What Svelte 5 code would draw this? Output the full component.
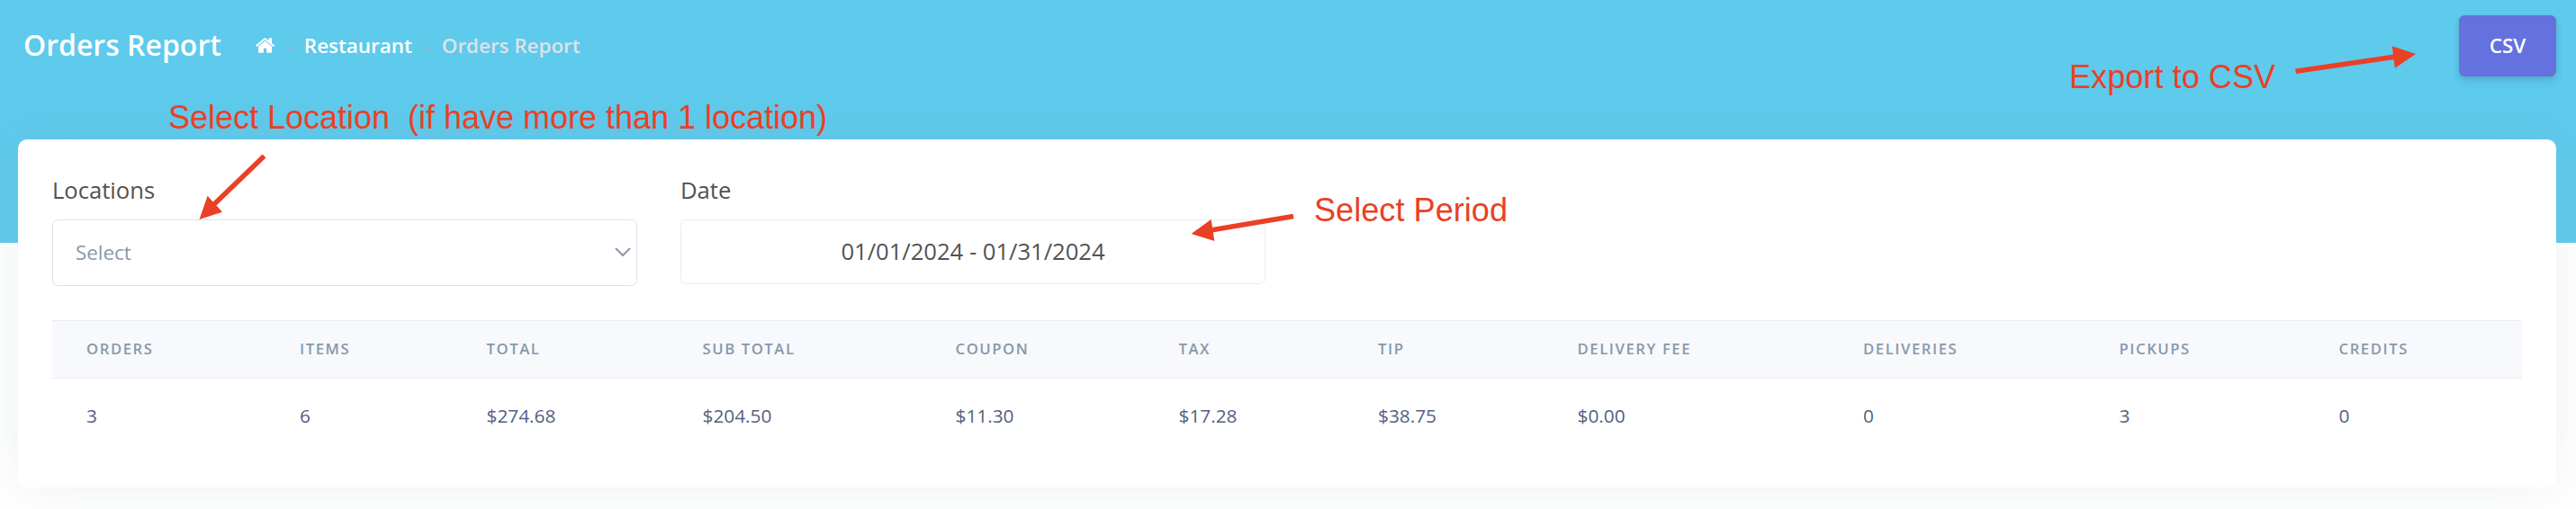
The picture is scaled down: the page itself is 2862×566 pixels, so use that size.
<script>
    const columns = [
        { label: 'Orders', value: '3', width: 237 },
        { label: 'Items', value: '6', width: 207.5 },
        { label: 'Total', value: '$274.68', width: 240 },
        { label: 'Sub total', value: '$204.50', width: 281 },
        { label: 'Coupon', value: '$11.30', width: 248 },
        { label: 'Tax', value: '$17.28', width: 221.5 },
        { label: 'Tip', value: '$38.75', width: 221.5 },
        { label: 'Delivery fee', value: '$0.00', width: 317.5 },
        { label: 'Deliveries', value: '0', width: 284.5 },
        { label: 'Pickups', value: '3', width: 244 },
        { label: 'Credits', value: '0', width: 241.5 }
    ];

    const notes = [
        { text: 'Select Location\u00a0 (if have more than 1 location)', x: 187, y: 142.5, width: 732 },
        { text: 'Select Period', x: 1460, y: 246, width: 215 },
        { text: 'Export to CSV', x: 2299, y: 97.5, width: 229 }
    ];

    const arrows = [
        { shaft: 'M293.5 173.5L236 229', head: '221.5,244 230.6,217.7 247,235.7' },
        { shaft: 'M1437 240.5L1345 256', head: '1323.5,260 1345.6,244 1349.3,268' },
        { shaft: 'M2550.5 79.3L2662 63', head: '2684,60 2657.7,51.3 2660.8,75.7' }
    ];
</script>

<div class="page">
    <header>
        <h1>Orders Report</h1>
        <nav>
            <a class="home" href="#home" aria-label="Home">
                <svg viewBox="90 250 1612 1290" width="21" height="17">
                    <path d="M1472 992v480q0 26-19 45t-45 19h-384v-384h-256v384h-384q-26 0-45-19t-19-45v-480q0-1 .5-3t.5-3l575-474 575 474q1 2 1 6zm223-69l-62 74q-8 9-21 11h-3q-13 0-21-7l-692-577-692 577q-12 8-24 7-13-2-21-11l-62-74q-8-10-7-23.5t11-21.5l719-599q32-26 76-26t76 26l244 204v-195q0-14 9-23t23-9h192q14 0 23 9t9 23v408l219 182q10 8 11 21.5t-7 23.5z" />
                </svg>
            </a>
            <span class="dash">-</span>
            <a href="#restaurant">Restaurant</a>
            <span class="dash">-</span>
            <span class="current">Orders Report</span>
        </nav>
        <button class="csv">CSV</button>
    </header>

    <main class="card">
        <div class="filters">
            <div class="field">
                <div class="label">Locations</div>
                <div class="select">
                    <span>Select</span>
                    <svg class="chevron" viewBox="0 0 18 10" width="18" height="10">
                        <path d="M1 1L9 9L17 1" />
                    </svg>
                </div>
            </div>
            <div class="field">
                <div class="label">Date</div>
                <div class="date">01/01/2024 - 01/31/2024</div>
            </div>
        </div>

        <table>
            <colgroup>
                {#each columns as column}
                    <col style="width: {column.width}px" />
                {/each}
            </colgroup>
            <thead>
                <tr>
                    {#each columns as column}
                        <th>{column.label}</th>
                    {/each}
                </tr>
            </thead>
            <tbody>
                <tr>
                    {#each columns as column}
                        <td>{column.value}</td>
                    {/each}
                </tr>
            </tbody>
        </table>
    </main>

    <svg class="notes" viewBox="0 0 2862 566" width="2862" height="566">
        {#each arrows as arrow}
            <path d={arrow.shaft} />
            <polygon points={arrow.head} />
        {/each}
        {#each notes as note}
            <text x={note.x} y={note.y} textLength={note.width}>{note.text}</text>
        {/each}
    </svg>
</div>

<style>
    :global(body) {
        margin: 0;
    }

    .page {
        position: relative;
        box-sizing: border-box;
        width: 2862px;
        height: 566px;
        padding: 0 22px 0 20px;
        overflow: hidden;
        font-family: "Open Sans", sans-serif;
        background: linear-gradient(#5ecaec 270px, #fff 270px);
    }

    header {
        display: flex;
        align-items: center;
        box-sizing: border-box;
        height: 155px;
        padding: 0 0 53px 6px;
        color: #fff;
    }

    h1 {
        margin: 0 0 2px;
        font-size: 32px;
        font-weight: 600;
        line-height: 48px;
    }

    nav {
        display: flex;
        align-items: center;
        flex: 1;
        margin: 0 0 2px 38px;
        font-size: 22.4px;
        font-weight: 600;
    }

    nav a {
        color: #fff;
        text-decoration: none;
    }

    .home {
        display: flex;
    }

    .home svg {
        fill: #fff;
    }

    .dash {
        width: 33px;
        text-align: center;
        color: #b2b0b6;
    }

    .current {
        color: #dee2e6;
    }

    .csv {
        width: 108px;
        height: 68px;
        padding: 0 0 2px;
        color: #fff;
        font: 600 22.4px "Open Sans", sans-serif;
        background: #6571df;
        border: 0;
        border-radius: 6.4px;
        box-shadow: 0 6px 10px rgba(50, 50, 93, 0.11), 0 2px 5px rgba(0, 0, 0, 0.08);
    }

    .card {
        box-sizing: border-box;
        height: 387px;
        padding: 38px;
        background: #fff;
        border-radius: 10px;
        box-shadow: 0 0 51px rgba(136, 152, 170, 0.15);
    }

    .filters {
        display: flex;
        align-items: flex-start;
        gap: 48px;
        height: 163px;
    }

    .field {
        width: 650px;
    }

    .label {
        height: 51px;
        color: #525252;
        font-size: 25.6px;
        line-height: 38px;
    }

    .select,
    .date {
        display: flex;
        align-items: center;
        box-sizing: border-box;
        padding-bottom: 2px;
        border-radius: 6.4px;
    }

    .select {
        justify-content: space-between;
        height: 74px;
        padding: 0 6px 2px 25px;
        color: #8898aa;
        font-size: 22.4px;
        border: 1px solid #dee2e6;
    }

    .chevron {
        fill: none;
        stroke: #8898aa;
        stroke-width: 2;
    }

    .date {
        justify-content: center;
        height: 72px;
        color: #525252;
        font-size: 25.6px;
        border: 1px solid #ececec;
    }

    table {
        width: 2744px;
        table-layout: fixed;
        border-collapse: collapse;
    }

    th,
    td {
        padding: 0 0 2px 38px;
        box-sizing: border-box;
        text-align: left;
    }

    th {
        height: 64px;
        color: #8898aa;
        font-size: 16.64px;
        font-weight: 600;
        letter-spacing: 1.6px;
        text-transform: uppercase;
        background: #f7f9fd;
        border-top: 1px solid #e9ecef;
        border-bottom: 1px solid #e9ecef;
    }

    td {
        height: 84px;
        color: #525f7f;
        font-size: 20.8px;
    }

    /* callouts drawn over the page */
    .notes {
        position: absolute;
        top: 0;
        left: 0;
        fill: #ea4025;
    }

    .notes path {
        stroke: #ea4025;
        stroke-width: 5.5;
    }

    .notes text {
        font-family: "Liberation Sans", Arial, sans-serif;
        font-size: 36px;
    }
</style>
